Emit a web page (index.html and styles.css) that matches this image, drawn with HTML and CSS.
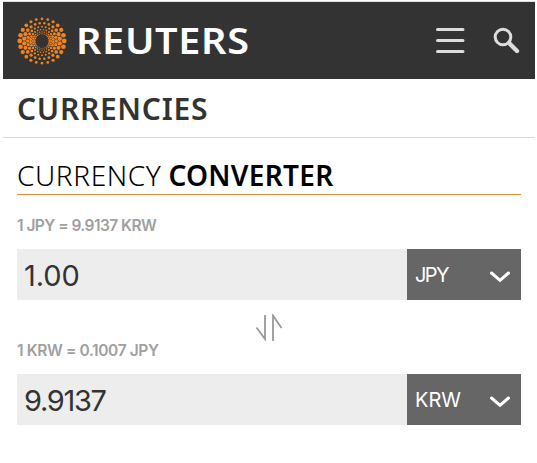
FILE: index.html
```
<!DOCTYPE html>
<html lang="en">
<head>
    <meta charset="UTF-8">
    <meta name="viewport" content="width=device-width, initial-scale=1.0">
    <title>Currency Converter</title>
    <link rel="stylesheet" href="styles.css">
</head>
<body>

<header class="topbar">
    <div class="brand">
        <svg class="logo" id="logo" width="52" height="52" viewBox="-26 -26 52 52"></svg>
        <span class="brand-name">REUTERS</span>
    </div>
    <div class="actions">
        <svg width="30" height="28" viewBox="0 0 30 28">
            <path d="M1.5 2.5H27M1.5 13.5H27M1.5 24.5H27" />
        </svg>
        <svg class="search" width="28" height="28" viewBox="0 0 28 28">
            <circle cx="10" cy="10" r="7.8" />
            <path d="M16 16L24 24" />
        </svg>
    </div>
</header>

<div class="section">
    <h1>CURRENCIES</h1>
</div>

<main class="converter">
    <h2><span>CURRENCY</span><b>CONVERTER</b></h2>

    <label class="rate" for="from">1 JPY = 9.9137 KRW</label>
    <div class="row">
        <input class="amount" type="text" id="from" value="1.00">
        <button class="currency currency-from">JPY
            <svg width="22" height="14" viewBox="0 0 22 14"><path d="M2.5 3L11 10.3L19.5 3" /></svg>
        </button>
    </div>

    <div class="swap">
        <svg width="28" height="28" viewBox="0 0 28 28">
            <path d="M1.5 13.5L10 25V1M18 27V1.5L26.5 14" />
        </svg>
    </div>

    <label class="rate second" for="to">1 KRW = 0.1007 JPY</label>
    <div class="row">
        <input class="amount amount-to" type="text" id="to" value="9.9137">
        <button class="currency">KRW
            <svg width="22" height="14" viewBox="0 0 22 14"><path d="M2.5 3L11 10.3L19.5 3" /></svg>
        </button>
    </div>
</main>

<script src="script.js"></script>
</body>
</html>
```
FILE: styles.css
```
* {
    box-sizing: border-box;
}

body {
    margin: 0;
    padding: 2px 2px 0 3px;
    font-family: "Noto Sans", "Open Sans", sans-serif;
    background-color: #fff;
    color: #333;
}

.topbar {
    display: flex;
    justify-content: space-between;
    align-items: center;
    height: 77px;
    padding: 0 14px 0 13px;
    background-color: #333;
    box-shadow: 0 -1px 0 #dde1e3;
}

.brand {
    display: flex;
    align-items: center;
}

.logo {
    fill: #f0831e;
}

.brand-name {
    margin-left: 8px;
    font-size: 36px;
    line-height: 52px;
    font-weight: 600;
    letter-spacing: 0.6px;
    color: #fff;
    transform: scaleX(1.1);
    transform-origin: left;
}

.actions {
    display: flex;
    align-items: center;
    gap: 27px;
}

.actions svg {
    fill: none;
    stroke: #ddd;
    stroke-width: 3;
    stroke-linecap: round;
}

.actions .search path {
    stroke-width: 4.4;
}

.section {
    height: 59px;
    padding: 0 14px;
    border-bottom: 1px solid #d8d8d8;
}

h1 {
    margin: 0;
    font-size: 30px;
    line-height: 60px;
    font-weight: 600;
    letter-spacing: 0.7px;
}

.converter {
    padding: 0 14px;
}

h2 {
    display: flex;
    gap: 7px;
    height: 57px;
    margin: 0;
    padding-top: 17px;
    border-bottom: 1px solid #d9923a;
    font-size: 28px;
    line-height: 40px;
    font-weight: 300;
    letter-spacing: 0.6px;
    color: #000;
}

h2 b {
    font-weight: 600;
    letter-spacing: 0.3px;
}

.rate {
    display: block;
    height: 54px;
    padding-top: 20px;
    font-family: Inter, sans-serif;
    font-size: 15.5px;
    line-height: 22px;
    font-weight: 600;
    letter-spacing: -0.54px;
    color: #a0a0a0;
}

.rate.second {
    height: 35px;
    padding-top: 1px;
    letter-spacing: -0.38px;
}

.row {
    display: flex;
    height: 51px;
}

.amount {
    flex: 1;
    min-width: 0;
    padding: 1px 7px 0;
    border: 0;
    border-radius: 0;
    background-color: #ededed;
    font-family: Inter, sans-serif;
    font-size: 29px;
    letter-spacing: -0.1px;
    color: #333;
}

.amount-to {
    letter-spacing: -1.3px;
}

.currency {
    display: flex;
    justify-content: space-between;
    align-items: center;
    width: 114px;
    padding: 0 10px 0 8px;
    border: 0;
    background-color: #666;
    font-family: Inter, sans-serif;
    font-size: 20px;
    color: #fff;
}

.currency-from {
    letter-spacing: -1.6px;
}

.currency svg {
    margin-top: 4px;
    fill: none;
    stroke: #fff;
    stroke-width: 3;
    stroke-linecap: round;
}

.swap {
    display: flex;
    justify-content: center;
    height: 39px;
    padding-top: 14px;
}

.swap svg {
    fill: none;
    stroke: #999;
    stroke-width: 1.8;
}
```
FILE: script.js
```
let logo = document.getElementById('logo');
let rings = [
    { r: 22.2, size: 1.95 },
    { r: 17.9, size: 1.8 },
    { r: 14.3, size: 1.4 },
    { r: 11.4, size: 1.15 },
    { r: 9.1, size: 0.9 },
    { r: 7.3, size: 0.75 }
];

// 24 dots on each ring, every second ring is turned by half a step
rings.forEach((ring, i) => {
    for (let n = 0; n < 24; n++) {
        let angle = (n + (i % 2) / 2) * Math.PI / 12;
        let x = Math.cos(angle);
        let y = Math.sin(angle);
        let dot = document.createElementNS('http://www.w3.org/2000/svg', 'circle');
        dot.setAttribute('cx', x * ring.r);
        dot.setAttribute('cy', y * ring.r);
        dot.setAttribute('r', ring.size * (0.68 + 0.55 * x * x));
        logo.appendChild(dot);
    }
});
```
